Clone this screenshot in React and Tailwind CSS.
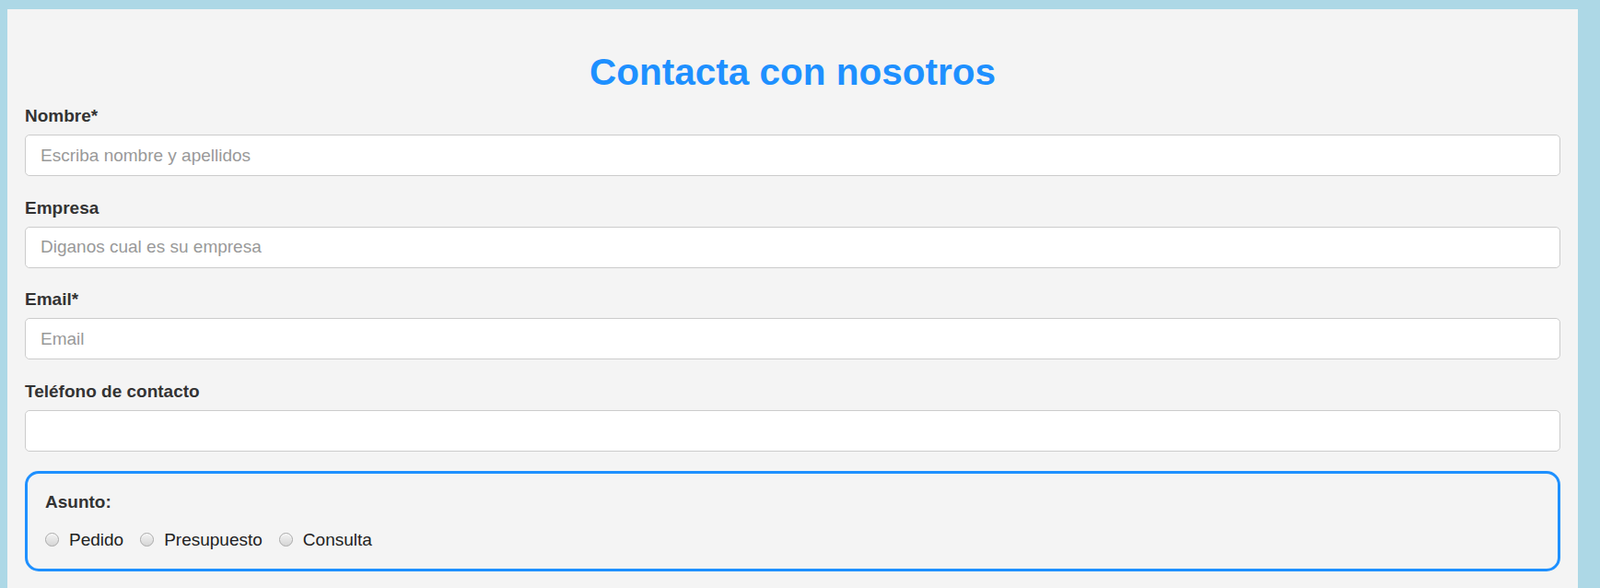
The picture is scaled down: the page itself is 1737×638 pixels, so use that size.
import React from "react";

function Field({ label, placeholder, last }) {
  return (
    <div className={last ? "mb-[21px]" : "mb-[24.5px]"}>
      <label className="block text-[19px] leading-[20px] font-bold text-[#333333] mb-[10px]">
        {label}
      </label>
      <input
        type="text"
        placeholder={placeholder}
        className="block w-full h-[45px] rounded-[5px] border border-[#cccccc] bg-white px-[16px] text-[19px] text-[#333333] placeholder:text-[#999999] outline-none"
      />
    </div>
  );
}

function Radio({ label }) {
  return (
    <label className="flex items-center mr-[18px]">
      <span className="inline-block w-[15px] h-[15px] rounded-full border border-[#a9a9a9] bg-linear-to-b from-[#f3f3f3] to-[#d6d6d6] shadow-[inset_0_1px_1px_rgba(255,255,255,0.8)]" />
      <span className="ml-[11px] text-[19px] leading-[20px] text-[#222222]">{label}</span>
    </label>
  );
}

export default function App() {
  return (
    <div
      className="h-[638px] overflow-hidden bg-[#add8e6] pt-[10px] pl-[8px] pr-[24px]"
      style={{ fontFamily: '"Liberation Sans", Arial, sans-serif' }}
    >
      <div className="h-full bg-[#f4f4f4] px-[19px] pt-[45px]">
        <h1 className="text-center text-[40.5px] leading-[46px] font-bold text-[#1e90ff]">
          Contacta con nosotros
        </h1>
        <form className="mt-[15px]">
          <Field label="Nombre*" placeholder="Escriba nombre y apellidos" />
          <Field label="Empresa" placeholder="Diganos cual es su empresa" />
          <Field label="Email*" placeholder="Email" />
          <Field label="Teléfono de contacto" placeholder="" last />
          <div className="rounded-[15px] border-[3px] border-[#1e90ff] pl-[19px] pr-[19px] pt-[21px] pb-[21px]">
            <div className="text-[19px] leading-[20px] font-bold text-[#333333]">Asunto:</div>
            <div className="mt-[21px] flex items-center">
              <Radio label="Pedido" />
              <Radio label="Presupuesto" />
              <Radio label="Consulta" />
            </div>
          </div>
        </form>
      </div>
    </div>
  );
}
